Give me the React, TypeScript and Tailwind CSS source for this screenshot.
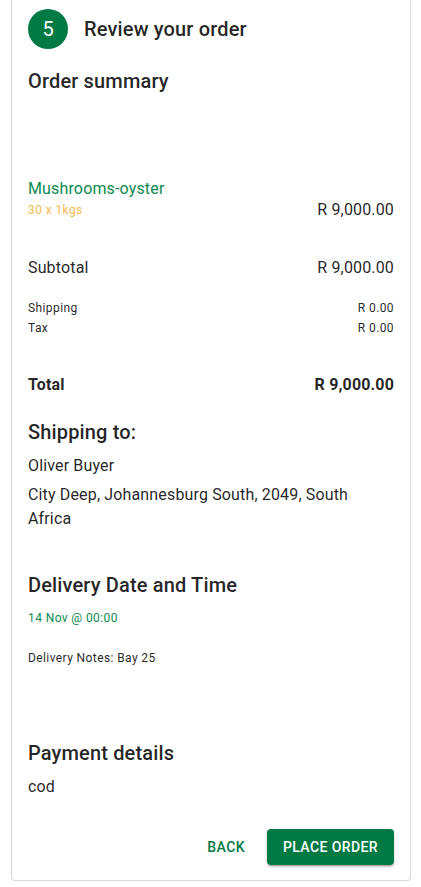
import React from "react";

export default function App() {
  return (
    <div className="min-h-[887px] bg-white" style={{ fontFamily: "Roboto, 'Liberation Sans', sans-serif" }}>
      <div className="ml-[11px] mr-[10px] border-x border-b border-[#dadada] rounded-b-[4px] px-4 pt-[9px] pb-[15px] text-[rgba(0,0,0,0.87)]">
        <div className="flex items-center h-10">
          <div className="w-10 h-10 rounded-full bg-[#007a45] text-white flex items-center justify-center text-[20px]">5</div>
          <div className="ml-4 text-[20px] font-medium tracking-[0.15px]">Review your order</div>
        </div>
        <div className="mt-4 text-[20px] leading-8 font-medium tracking-[0.15px]">Order summary</div>
        <div className="mt-[82px] text-[16px] leading-5 text-[#0b8a4f] tracking-[0.15px]">Mushrooms-oyster</div>
        <div className="flex items-center justify-between h-[22px]">
          <span className="text-[12px] text-[#f6b94f] tracking-[0.4px]">30 x 1kgs</span>
          <span className="text-[16px] tracking-[0.15px]">R 9,000.00</span>
        </div>
        <div className="mt-[35px] flex justify-between text-[16px] leading-6 tracking-[0.15px]">
          <span>Subtotal</span>
          <span>R 9,000.00</span>
        </div>
        <div className="mt-[18px] flex justify-between text-[12px] leading-5 tracking-[0.4px]">
          <span>Shipping</span>
          <span>R 0.00</span>
        </div>
        <div className="flex justify-between text-[12px] leading-5 tracking-[0.4px]">
          <span>Tax</span>
          <span>R 0.00</span>
        </div>
        <div className="mt-[35px] flex justify-between text-[16px] leading-6 font-bold tracking-[0.15px]">
          <span>Total</span>
          <span>R 9,000.00</span>
        </div>
        <div className="mt-[19px] text-[20px] leading-8 font-medium tracking-[0.15px]">Shipping to:</div>
        <div className="mt-[6px] text-[16px] leading-6 tracking-[0.15px]">Oliver Buyer</div>
        <div className="mt-[5px] text-[16px] leading-6 tracking-[0.15px] pr-10">City Deep, Johannesburg South, 2049, South Africa</div>
        <div className="mt-[38px] text-[20px] leading-8 font-medium tracking-[0.15px]">Delivery Date and Time</div>
        <div className="mt-[7px] text-[12px] leading-5 text-[#0b8a4f] tracking-[0.4px]">14 Nov @ 00:00</div>
        <div className="mt-5 text-[12px] leading-5 tracking-[0.4px]">Delivery Notes: Bay 25</div>
        <div className="mt-[69px] text-[20px] leading-8 font-medium tracking-[0.15px]">Payment details</div>
        <div className="mt-[6px] text-[16px] leading-6 tracking-[0.15px]">cod</div>
        <div className="mt-[30px] flex justify-end items-center gap-[14px]">
          <button className="h-9 px-2 text-[14px] font-medium uppercase tracking-[0.4px] text-[#007a45]">Back</button>
          <button className="h-9 px-4 rounded-[4px] bg-[#007a45] text-white text-[14px] font-medium uppercase tracking-[0.4px] shadow-[0_3px_1px_-2px_rgba(0,0,0,0.2),0_2px_2px_0_rgba(0,0,0,0.14),0_1px_5px_0_rgba(0,0,0,0.12)]">Place order</button>
        </div>
      </div>
    </div>
  );
}
